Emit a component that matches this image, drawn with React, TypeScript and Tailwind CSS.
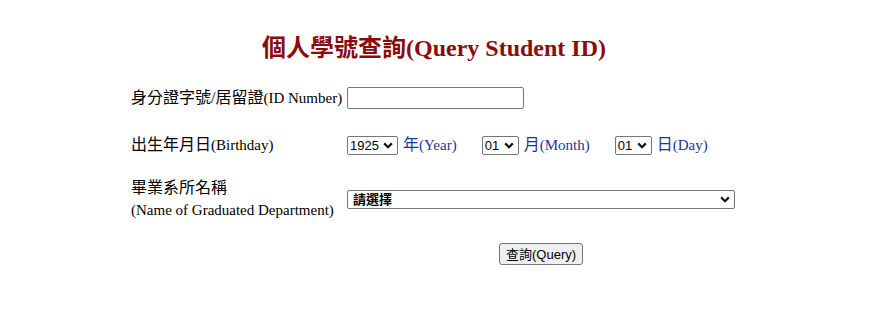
import type { ReactNode } from 'react'

const serif = 'font-["Liberation_Serif","Noto_Sans_CJK_TC",serif]'

// CJK glyphs sit a bit larger than the latin part in the original page
const Cjk = ({ children }: { children: ReactNode }) => <span className="text-[16px]">{children}</span>

const Chevron = () => (
  <svg width="10" height="7" viewBox="0 0 10 7" className="shrink-0">
    <path d="M1.2 1.4 L5 5.2 L8.8 1.4" fill="none" stroke="#111" strokeWidth="2.2" />
  </svg>
)

const FakeSelect = ({ value, width, bold }: { value: string; width: string; bold?: boolean }) => (
  <div
    className={`${width} h-[19px] flex items-center justify-between border border-[#767676] rounded-[2px] bg-white pl-[2px] pr-[4px] text-[13px] leading-none text-black font-["Liberation_Sans","Noto_Sans_CJK_TC",sans-serif] ${bold ? 'font-bold pl-[5px]' : ''}`}
  >
    <span>{value}</span>
    <Chevron />
  </div>
)

const App = () => {
  return (
    <main className={`w-[890px] h-[318px] bg-white text-black ${serif}`}>
      <h1 className="pt-[34px] h-[64px] text-center text-[24px] font-bold leading-[28px] text-[#8a0c0c] pr-[22px]">
        個人學號查詢(Query Student ID)
      </h1>
      <div className="ml-[131px] text-[15px] leading-[18px]">
        <div className="flex items-center h-[24px] mt-[22px]">
          <span className="w-[216px] whitespace-nowrap">
            <Cjk>身分證字號/居留證</Cjk>(ID Number)
          </span>
          <div className="w-[177px] h-[22px] border border-[#767676] rounded-[2px]" />
        </div>
        <div className="flex items-center h-[20px] mt-[25px]">
          <span className="w-[216px]">
            <Cjk>出生年月日</Cjk>(Birthday)
          </span>
          <FakeSelect value="1925" width="w-[51px]" />
          <span className="ml-[5px] text-[#1e3494]">
            <Cjk>年</Cjk>(Year)
          </span>
          <div className="ml-[25px]">
            <FakeSelect value="01" width="w-[37px]" />
          </div>
          <span className="ml-[5px] text-[#1e3494]">
            <Cjk>月</Cjk>(Month)
          </span>
          <div className="ml-[25px]">
            <FakeSelect value="01" width="w-[37px]" />
          </div>
          <span className="ml-[5px] text-[#1e3494]">
            <Cjk>日</Cjk>(Day)
          </span>
        </div>
        <div className="flex items-center mt-[24px]">
          <div className="w-[216px] flex flex-col gap-[4px]">
            <Cjk>畢業系所名稱</Cjk>
            <span className="whitespace-nowrap">(Name of Graduated Department)</span>
          </div>
          <FakeSelect value="請選擇" width="w-[388px]" bold />
        </div>
        <div className="flex mt-[24px] ml-[368px]">
          <button className='h-[22px] px-[6px] border border-[#767676] rounded-[3px] bg-[#efefef] text-[13px] leading-none font-["Liberation_Sans","Noto_Sans_CJK_TC",sans-serif]'>
            查詢(Query)
          </button>
        </div>
      </div>
    </main>
  )
}

export default App
